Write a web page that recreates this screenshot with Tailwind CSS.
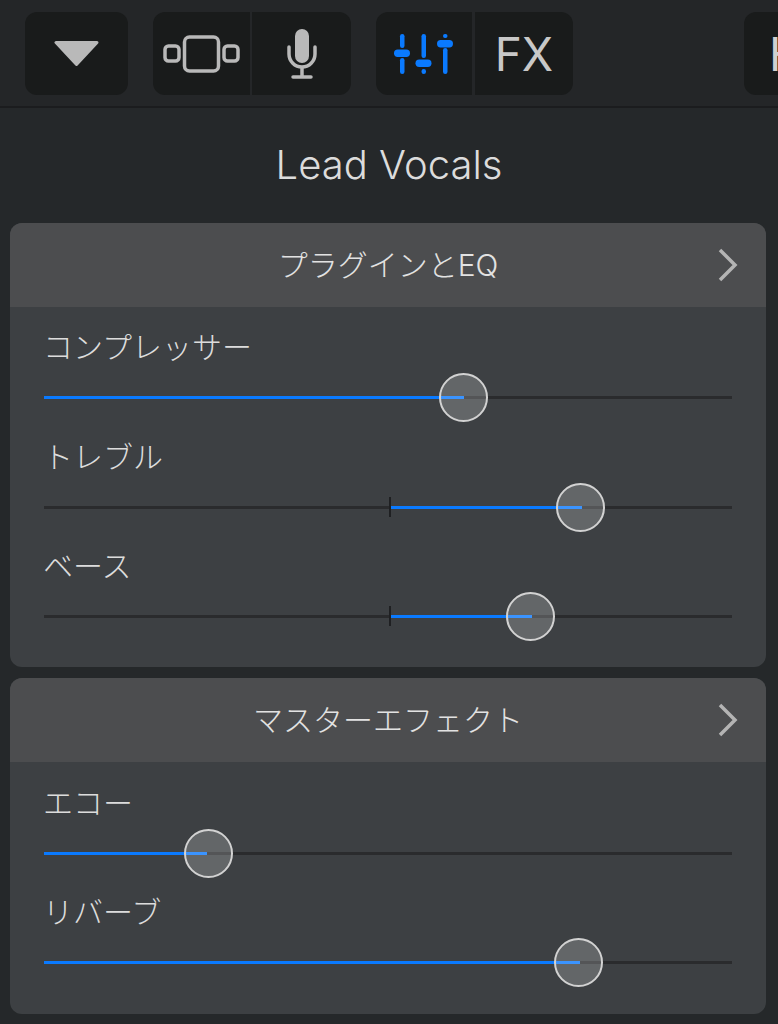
<!DOCTYPE html>
<html lang="ja">

<head>
  <meta charset="UTF-8">
  <meta name="viewport" content="width=device-width, initial-scale=1.0">
  <title>Lead Vocals</title>
  <script src="https://cdn.jsdelivr.net/npm/@tailwindcss/browser@4"></script>
</head>

<body class="w-[778px] h-[1024px] overflow-hidden bg-[#25282a] font-['Inter','Noto_Sans_CJK_JP',sans-serif] text-[#e2e2e2]">
  <!-- Toolbar -->
  <div class="flex h-[108px] pt-3 pl-[25px] bg-[#242628] border-b-2 border-[#1b1c1e] overflow-hidden">
    <button class="w-[103px] h-[83px] shrink-0 flex items-center justify-center rounded-xl bg-[#191b1b]">
      <svg width="45" height="25" viewBox="0 0 45 25"><path d="M2 1.5h41L22.5 23.5z" fill="#b9b9b9" stroke="#b9b9b9" stroke-width="3" stroke-linejoin="round" /></svg>
    </button>

    <div class="ml-[25px] flex shrink-0 h-[83px] rounded-xl overflow-hidden">
      <button class="w-[97px] flex items-center justify-center bg-[#191b1b]">
        <svg width="77" height="38" viewBox="0 0 77 38" fill="none" stroke="#b9b9b9" stroke-width="3.5">
          <rect x="2" y="11" width="14" height="15" rx="3.5" />
          <rect x="21.5" y="2" width="34" height="34" rx="5" />
          <rect x="61" y="11" width="14" height="15" rx="3.5" />
        </svg>
      </button>
      <button class="ml-[2px] w-[99px] flex items-center justify-center bg-[#191b1b]">
        <svg width="30" height="50" viewBox="0 0 30 50" fill="none">
          <rect x="8" y="0" width="14" height="34" rx="7" fill="#b9b9b9" />
          <path d="M2 18v7a13 13 0 0 0 26 0v-7" stroke="#b9b9b9" stroke-width="3.5" stroke-linecap="round" />
          <path d="M15 38v9" stroke="#b9b9b9" stroke-width="3.5" />
          <path d="M6 48h18" stroke="#b9b9b9" stroke-width="3.5" stroke-linecap="round" />
        </svg>
      </button>
    </div>

    <div class="ml-[25px] flex shrink-0 h-[83px] rounded-xl overflow-hidden">
      <button class="w-[96px] flex items-center justify-center bg-[#191b1b]">
        <svg width="60" height="40" viewBox="0 0 60 40" fill="#0a7aff">
          <rect x="6" y="0" width="4.5" height="14" rx="2.2" />
          <rect x="6" y="24" width="4.5" height="16" rx="2.2" />
          <rect x="0" y="15.5" width="16" height="7.5" rx="3.7" />
          <rect x="27.5" y="0" width="4.5" height="24" rx="2.2" />
          <rect x="27.5" y="35" width="4.5" height="5" rx="2.2" />
          <rect x="21.5" y="25.5" width="16" height="7.5" rx="3.7" />
          <rect x="49" y="0" width="4.5" height="4" rx="2" />
          <rect x="49" y="14" width="4.5" height="26" rx="2.2" />
          <rect x="43" y="6" width="16" height="7.5" rx="3.7" />
        </svg>
      </button>
      <button class="ml-[3px] w-[98px] flex items-center justify-center bg-[#191b1b] text-[#c8c8c8] text-[46px] leading-none">FX</button>
    </div>

    <div class="ml-[171px] flex shrink-0 w-[100px] h-[83px] pl-[25px] items-center rounded-xl bg-[#191b1b] text-[#d0d0d0] text-[46px] leading-none">H</div>
  </div>

  <h1 class="h-[115px] flex items-center justify-center text-[40px] font-[350] text-[#dcdcdc] pb-[2px]">Lead Vocals</h1>

  <!-- Plugins and EQ -->
  <section class="mx-[10px] w-[756px] rounded-xl overflow-hidden bg-[#3d4043]">
    <div class="relative h-[84px] flex items-center justify-center bg-[#4c4d4f] text-[30px] font-light">
      プラグインとEQ
      <svg class="absolute left-[707px] top-[25px]" width="22" height="34" viewBox="0 0 22 34" fill="none" stroke="#b4b4b4" stroke-width="3.5"><path d="M3 2l15 15L3 32" /></svg>
    </div>
    <div class="pt-[23px] pb-[18px]">
      <div>
        <div class="h-[34px] pl-[33px] flex items-center text-[30px] font-light text-[#dcdcdc]">コンプレッサー</div>
        <div class="relative h-[66px] mx-[34px]">
          <div class="absolute inset-x-0 top-[32px] h-[3px] bg-[#2a2b2d]"></div>
          <div class="absolute left-0 w-[420px] top-[32px] h-[3px] bg-[#0a7aff]"></div>
          <div class="absolute left-[395px] top-[9px] size-[49px] rounded-full border-[2.5px] border-[#d2d2d2] bg-white/20"></div>
        </div>
      </div>
      <div class="mt-[10px]">
        <div class="h-[34px] pl-[33px] flex items-center text-[30px] font-light text-[#dcdcdc]">トレブル</div>
        <div class="relative h-[66px] mx-[34px]">
          <div class="absolute inset-x-0 top-[32px] h-[3px] bg-[#2a2b2d]"></div>
          <div class="absolute left-[345px] top-[23px] w-[2px] h-[20px] bg-[#1f2022]"></div>
          <div class="absolute left-[347px] w-[191px] top-[32px] h-[3px] bg-[#0a7aff]"></div>
          <div class="absolute left-[512px] top-[9px] size-[49px] rounded-full border-[2.5px] border-[#d2d2d2] bg-white/20"></div>
        </div>
      </div>
      <div class="mt-[9px]">
        <div class="h-[34px] pl-[33px] flex items-center text-[30px] font-light text-[#dcdcdc]">ベース</div>
        <div class="relative h-[66px] mx-[34px]">
          <div class="absolute inset-x-0 top-[32px] h-[3px] bg-[#2a2b2d]"></div>
          <div class="absolute left-[345px] top-[23px] w-[2px] h-[20px] bg-[#1f2022]"></div>
          <div class="absolute left-[347px] w-[141px] top-[32px] h-[3px] bg-[#0a7aff]"></div>
          <div class="absolute left-[462px] top-[9px] size-[49px] rounded-full border-[2.5px] border-[#d2d2d2] bg-white/20"></div>
        </div>
      </div>
    </div>
  </section>

  <!-- Master effects -->
  <section class="mt-[11px] mx-[10px] w-[756px] rounded-xl overflow-hidden bg-[#3d4043]">
    <div class="relative h-[84px] flex items-center justify-center bg-[#4c4d4f] text-[30px] font-light">
      マスターエフェクト
      <svg class="absolute left-[707px] top-[25px]" width="22" height="34" viewBox="0 0 22 34" fill="none" stroke="#b4b4b4" stroke-width="3.5"><path d="M3 2l15 15L3 32" /></svg>
    </div>
    <div class="pt-[24px] pb-[19px]">
      <div>
        <div class="h-[34px] pl-[33px] flex items-center text-[30px] font-light text-[#dcdcdc]">エコー</div>
        <div class="relative h-[66px] mx-[34px]">
          <div class="absolute inset-x-0 top-[32px] h-[3px] bg-[#2a2b2d]"></div>
          <div class="absolute left-0 w-[163px] top-[32px] h-[3px] bg-[#0a7aff]"></div>
          <div class="absolute left-[140px] top-[9px] size-[49px] rounded-full border-[2.5px] border-[#d2d2d2] bg-white/20"></div>
        </div>
      </div>
      <div class="mt-[9px]">
        <div class="h-[34px] pl-[33px] flex items-center text-[30px] font-light text-[#dcdcdc]">リバーブ</div>
        <div class="relative h-[66px] mx-[34px]">
          <div class="absolute inset-x-0 top-[32px] h-[3px] bg-[#2a2b2d]"></div>
          <div class="absolute left-0 w-[536px] top-[32px] h-[3px] bg-[#0a7aff]"></div>
          <div class="absolute left-[510px] top-[9px] size-[49px] rounded-full border-[2.5px] border-[#d2d2d2] bg-white/20"></div>
        </div>
      </div>
    </div>
  </section>
</body>

</html>
